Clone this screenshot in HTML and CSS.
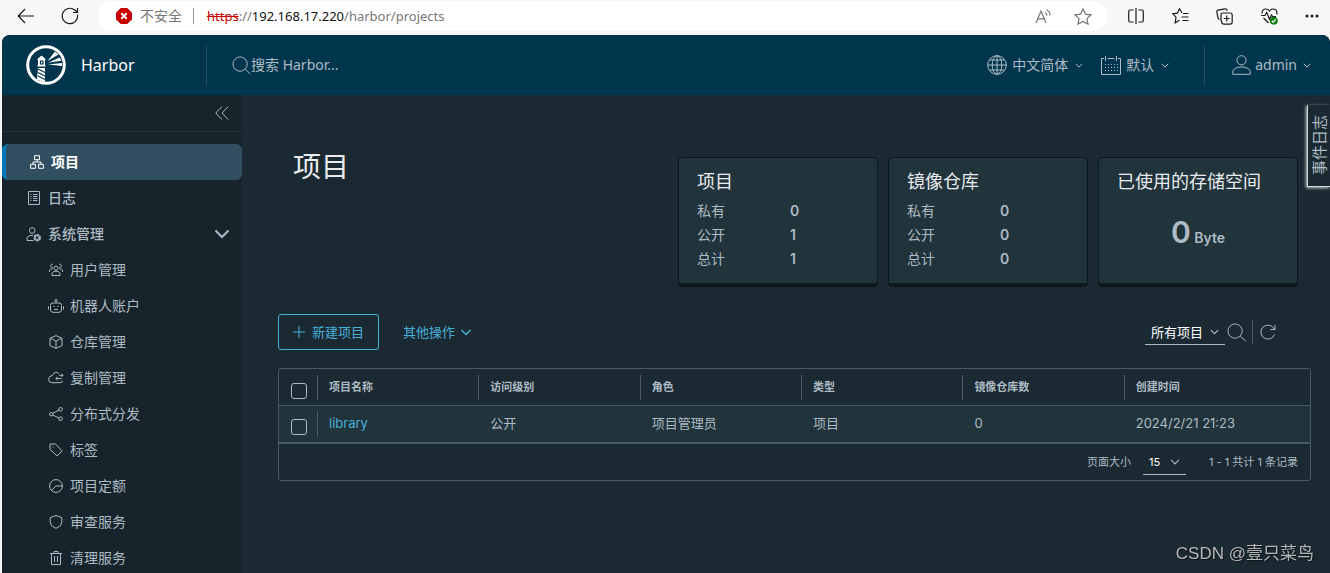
FILE: index.html
```html
<!DOCTYPE html>
<html lang="zh-CN">
<head>
<meta charset="utf-8">
<title>Harbor</title>
<link rel="stylesheet" href="styles.css">
</head>
<body>
<svg class="defs" aria-hidden="true">
  <symbol id="chevron" viewBox="0 0 16 10"><path d="M1.500 1.500 8 8l6.500-6.500"/></symbol>
  <symbol id="search" viewBox="0 0 20 20"><circle cx="8.500" cy="8.500" r="7.500"/><path d="m14 14 5.500 5"/></symbol>
</svg>

<div class="browser">
  <div class="browser-nav">
    <button class="tool" aria-label="后退"><svg width="18" height="16" viewBox="0 0 18 16"><path d="M17 8H1.500M8 1 1.200 8 8 15"/></svg></button>
    <button class="tool" aria-label="刷新"><svg width="18" height="18" viewBox="0 0 18 18"><path d="M16.500 7.500A7.700 7.700 0 1 1 13.800 3l2.200 2M16.500 1v4.500H12"/></svg></button>
  </div>
  <div class="address">
    <svg class="warn" width="16" height="16" viewBox="0 0 16 16"><path class="warn-bg" d="M4.700 0h6.600L16 4.700v6.600L11.300 16H4.700L0 11.300V4.700z"/><path class="warn-x" d="m5.300 5.300 5.400 5.400m0-5.400-5.400 5.400"/></svg>
    <span class="unsafe">不安全</span>
    <span class="address-sep"></span>
    <span class="url"><s>https</s>://<b>192.168.17.220</b>/harbor/projects</span>
    <button class="tool muted read" aria-label="朗读"><svg width="16" height="15" viewBox="0 0 16 15"><path d="M1 14 6 2l5 12M2.800 9.800h6.400M10 3.500q2 1 2 3M11.500.8q3.500 1.800 3.500 5.700"/></svg></button>
    <button class="tool muted" aria-label="收藏"><svg width="18" height="17" viewBox="0 0 18 17"><path d="m9 1 2.400 5.100 5.600.7-4.100 3.800 1.100 5.500L9 13.400l-5 2.700 1.100-5.500L1 6.800l5.600-.7z"/></svg></button>
  </div>
  <div class="browser-tools">
    <button class="tool" aria-label="分屏"><svg width="16" height="16" viewBox="0 0 16 16"><path d="M8 0v16M5.500 2H2Q.7 2 .7 3.500v9Q.7 14 2 14h3.500M10.500 2H14q1.300 0 1.300 1.500v9q0 1.500-1.300 1.500h-3.500"/></svg></button>
    <button class="tool" aria-label="收藏夹"><svg width="17" height="16" viewBox="0 0 17 16"><path d="M10 5 7.500.8 5.300 5.200.8 5.800 4 9.200l-.8 5.600 4.300-2.500M11 5.500h5.500M9.500 9h7M10.500 12.500h6"/></svg></button>
    <button class="tool" aria-label="集锦"><svg width="17" height="17" viewBox="0 0 17 17"><path d="M3.500 11.500Q2.300 11 2 10L.8 4Q.5 2.500 2 2.100L9 .8q1.500-.3 2 1.200l.3.900M5.700 13.500Q5 13 5 12V6.500Q5 5 6.500 5H14q2.200 0 2.200 2v7q0 2.200-2.200 2.200H8Q5.700 16.200 5.700 14zM10.700 7.500v6M7.700 10.500h6"/></svg></button>
    <button class="tool" aria-label="性能"><svg width="17" height="17" viewBox="0 0 17 17"><path d="M1 5.500Q1 1 5 1q2 0 3.500 2Q10 1 12 1q4 0 4 4.500v1M0 7.500h4l1.700-3L8.500 11l2-4 1 1.500H15M2.500 10l5 5"/><circle class="ok-dot" cx="12.700" cy="12.700" r="4"/><path class="ok-check" d="m10.800 13 1.300 1.200 2.500-2.700"/></svg></button>
    <button class="tool" aria-label="更多"><svg width="14" height="4" viewBox="0 0 14 4"><path class="dots" d="M2 2h.01M7 2h.01M12 2h.01"/></svg></button>
  </div>
</div>

<div class="app">
  <header class="header">
    <a class="brand" href="#">
      <svg width="40" height="40" viewBox="0 0 40 40"><circle class="ring" cx="20" cy="20" r="18.300"/><g class="fill"><path d="m15.500 10.500 4 3.500v1h-8v-1zM12 15h7v5h-7zM11.500 20h8v1.500h-8zM12 23h7v14.500l-8-3z"/><path d="m21.500 16 7.500-9.500 3.500 3zM22 17.800l11.500-5.300 2 3.300zM22 19.500l14-1.500v3z"/></g><path class="stripe" d="M14.500 16h2.500v3h-2.500zM12 24l7 3.500M12 27.500l7 3.500M12 31l7 3.500"/></svg>
      <span>Harbor</span>
    </a>
    <label class="search"><svg width="19" height="19"><use href="#search"/></svg><input type="text" placeholder="搜索 Harbor..." aria-label="搜索 Harbor"></label>
    <nav class="header-actions">
      <button class="menu lang"><svg width="20" height="20" viewBox="0 0 20 20"><circle cx="10" cy="10" r="9.300"/><ellipse cx="10" cy="10" rx="4.800" ry="9.300"/><path d="M10 .7v18.600M.7 10h18.600M2.500 5h15M2.500 15h15"/></svg><span>中文简体</span><svg class="caret" width="8" height="5"><use href="#chevron"/></svg></button>
      <button class="menu"><svg width="20" height="19" viewBox="0 0 20 19"><path d="M3 2.500H.5v16h19v-16H17M6.500 2.500h7M4.500 0v5M15.500 0v5"/><path class="dotted" d="M4 8.500h13M4 11.500h13M4 14.500h13"/></svg><span>默认</span><svg class="caret" width="8" height="5"><use href="#chevron"/></svg></button>
      <button class="menu user"><svg width="19" height="20" viewBox="0 0 19 20"><circle cx="9.500" cy="5.300" r="4.600"/><path d="M.8 19.300V16q2.200-4 8.700-4t8.700 4v3.300z"/></svg><span>admin</span><svg class="caret" width="8" height="5"><use href="#chevron"/></svg></button>
    </nav>
  </header>

  <div class="body">
    <aside class="sidebar">
      <div class="collapse"><button aria-label="折叠"><svg width="14" height="14" viewBox="0 0 14 14"><path d="M7 .5.800 7 7 13.500M13.200.5 7 7l6.200 6.500"/></svg></button></div>
      <nav class="side-nav">
        <a class="item active" href="#"><svg width="14" height="14" viewBox="0 0 14 14"><path d="M4.500.7h5v4h-5zM.6 9.300h4.800v4H.6zM8.600 9.300h4.800v4H8.600zM7 4.700V7M3 9.300V7h8v2.300"/></svg>项目</a>
        <a class="item top-level" href="#"><svg width="14" height="14" viewBox="0 0 14 14"><path d="M1.500.5h11v13h-11zM3.500 3.500h1M6 3.500h4.500M3.500 5.500h1M6 5.500h4.500M3.500 7.500h1M6 7.500h4.500M3.500 9.500h1M6 9.500h4.500"/></svg>日志</a>
        <a class="item top-level" href="#"><svg width="15" height="15" viewBox="0 0 15 15"><circle cx="5.700" cy="3.500" r="2.800"/><path d="M7 13.500H.6v-3Q2.300 8 6.500 8.200"/><circle class="gear" cx="10.700" cy="10.700" r="2.500"/></svg>系统管理<svg class="expand" width="16" height="10"><use href="#chevron"/></svg></a>
        <a class="item sub" href="#"><svg width="14" height="14" viewBox="0 0 14 14"><circle cx="7" cy="5.200" r="2"/><path d="M3 12.500v-2.300q1.200-2 4-2t4 2v2.300zM4 1.400a1.600 1.600 0 1 0-.2 2.900M10 1.400a1.600 1.600 0 1 1 .2 2.900M.5 9V7Q1.200 5.700 3.700 5.900M13.500 9V7q-.7-1.300-3.200-1.100"/></svg>用户管理</a>
        <a class="item sub" href="#"><svg width="16" height="14" viewBox="0 0 16 14"><rect x="2.500" y="4" width="11" height="9.300" rx="2.500"/><circle cx="8" cy="1.500" r="1"/><path d="M8 2.500V4M.5 7.500v3M15.500 7.500v3M5.500 7.500h1M9.500 7.500h1M6 10.500h4"/></svg>机器人账户</a>
        <a class="item sub" href="#"><svg width="14" height="14" viewBox="0 0 14 14"><path d="m7 .6 6 2.700v7.400l-6 2.700-6-2.700V3.300zM1 3.300 7 6l6-2.700M7 6v7.400"/></svg>仓库管理</a>
        <a class="item sub" href="#"><svg width="16" height="14" viewBox="0 0 16 14"><path d="M11 2.700Q7-1 4.300 4.500.6 5 .6 8.500q0 3.200 3.400 3.200h8q2.500 0 2.500-2M8 7.500h5.500M9.500 5.800 7.800 7.500l1.700 1.700M11 4.300h4M13.500 2.700 15 4.300l-1.500 1.600"/></svg>复制管理</a>
        <a class="item sub" href="#"><svg width="14" height="14" viewBox="0 0 14 14"><circle cx="2.200" cy="7.200" r="1.700"/><circle cx="11.500" cy="2.300" r="1.800"/><circle cx="11.500" cy="11.700" r="1.800"/><path d="m3.700 6.400 6.200-3.300M3.700 8l6.200 3"/></svg>分布式分发</a>
        <a class="item sub" href="#"><svg width="14" height="14" viewBox="0 0 14 14"><path d="M1 1h5.500l6.500 6.800-4.800 5.200L1 6.500z"/><path d="M3.500 3.800h1"/></svg>标签</a>
        <a class="item sub" href="#"><svg width="14" height="14" viewBox="0 0 14 14"><circle cx="7" cy="7" r="6.400"/><path d="M13.300 7H7L2.500 11.500"/></svg>项目定额</a>
        <a class="item sub" href="#"><svg width="14" height="14" viewBox="0 0 14 14"><path d="m7 .6 5.800 2v4.600q0 4-5.800 6.200-5.800-2.200-5.800-6.200V2.600z"/></svg>审查服务</a>
        <a class="item sub" href="#"><svg width="14" height="14" viewBox="0 0 14 14"><path d="M.8 2.500h12.400M2.500 2.500v11h9v-11M5 2.500v-2h4v2M5.500 5v6M8.500 5v6"/></svg>清理服务</a>
      </nav>
    </aside>

    <main class="main">
      <section class="top">
        <h1>项目</h1>
        <div class="cards">
          <article class="card"><h2>项目</h2><dl><dt>私有</dt><dd>0</dd><dt>公开</dt><dd>1</dd><dt>总计</dt><dd>1</dd></dl></article>
          <article class="card"><h2>镜像仓库</h2><dl><dt>私有</dt><dd>0</dd><dt>公开</dt><dd>0</dd><dt>总计</dt><dd>0</dd></dl></article>
          <article class="card"><h2>已使用的存储空间</h2><p class="storage"><strong>0</strong> Byte</p></article>
        </div>
      </section>

      <div class="toolbar">
        <button class="new"><svg width="12" height="12" viewBox="0 0 12 12"><path d="M6 0v12M0 6h12"/></svg>新建项目</button>
        <button class="other">其他操作<svg width="12" height="7"><use href="#chevron"/></svg></button>
        <div class="filter">
          <div class="select scope"><select aria-label="项目范围"><option>所有项目</option></select><svg width="9" height="6"><use href="#chevron"/></svg></div>
          <button aria-label="搜索"><svg width="19" height="19"><use href="#search"/></svg></button>
          <span class="filter-sep"></span>
          <button aria-label="刷新"><svg width="16" height="16" viewBox="0 0 16 16"><path d="M14.500 10.500A7 7 0 1 1 13.600 4l1.400 1.500M15 .8v4.700h-4.700"/></svg></button>
        </div>
      </div>

      <div class="grid">
        <table>
          <colgroup><col class="col-check"><col class="col"><col class="col"><col class="col"><col class="col"><col class="col"><col></colgroup>
          <thead><tr><th><input type="checkbox" aria-label="全选"></th><th>项目名称</th><th>访问级别</th><th>角色</th><th>类型</th><th>镜像仓库数</th><th>创建时间</th></tr></thead>
          <tbody><tr><td><input type="checkbox" aria-label="选择 library"></td><td><a href="#">library</a></td><td>公开</td><td>项目管理员</td><td>项目</td><td>0</td><td>2024/2/21 21:23</td></tr></tbody>
        </table>
        <footer class="pager">
          <label for="size">页面大小</label>
          <div class="select size"><select id="size"><option>15</option></select><svg width="10" height="6"><use href="#chevron"/></svg></div>
          <span>1 - 1 共计 1 条记录</span>
        </footer>
      </div>
    </main>
    <button class="event-tab"><span>事件日志</span></button>
  </div>
</div>
<div class="watermark">CSDN @壹只菜鸟</div>
</body>
</html>
```
FILE: styles.css
```css
* { box-sizing: border-box; }

body {
  margin: 0;
  height: 100vh;
  display: flex;
  flex-direction: column;
  overflow: hidden;
  background: #f7f7f7;
  color: #adbbc4;
  font: 14px/24px "Noto Sans", "Noto Sans CJK SC", sans-serif;
}

button, input, select { font: inherit; color: inherit; }
button { border: 0; padding: 0; background: none; display: flex; align-items: center; }
a { color: inherit; text-decoration: none; }
svg { fill: none; stroke: currentColor; stroke-width: 1; flex: none; }
h1, h2, p, dl, dd { margin: 0; }
.defs { position: absolute; width: 0; height: 0; }
#chevron { stroke-width: 2; }

/* Browser toolbar */
.browser { height: 35px; padding-bottom: 3px; display: flex; align-items: center; flex: none; color: #1b1b1b; }
.browser-nav { display: flex; gap: 26px; width: 98px; padding-left: 17px; }
.tool svg { stroke-width: 1.2; }
.muted { color: #767676; }
.address {
  flex: 1;
  height: 30px;
  padding: 0 16px 0 18px;
  display: flex;
  align-items: center;
  border-radius: 15px;
  background: #fff;
  color: #767676;
}
.warn { stroke: none; }
.warn-bg { fill: #c80000; }
.warn-x { stroke: #fff; stroke-width: 2; }
.unsafe { margin-left: 8px; }
.address-sep { width: 1px; height: 16px; margin: 0 13px 0 11px; background: #999; }
.url { flex: 1; font-size: 13px; }
.url s { color: #c80000; }
.url b { font-weight: 400; color: #111; }
.read { margin-right: 23px; }
.browser-tools { width: 222px; padding: 0 11px 0 20px; display: flex; align-items: center; justify-content: space-between; }
.ok-dot { fill: #107c10; stroke: none; }
.ok-check { stroke: #fff; }
.dots { stroke-width: 3; stroke-linecap: round; }

/* Application header */
.app {
  flex: 1;
  min-height: 0;
  margin-left: 2px;
  display: flex;
  flex-direction: column;
  overflow: hidden;
  border-radius: 8px 8px 0 0;
  background: #1b2a32;
}
.header { height: 60px; flex: none; display: flex; align-items: center; background: #00364d; }
.brand {
  width: 205px;
  height: 40px;
  padding-left: 24px;
  display: flex;
  align-items: center;
  gap: 15px;
  border-right: 1px solid #274f63;
  color: #fff;
  font-size: 16px;
}
.ring { stroke: #fff; stroke-width: 3; }
.fill { fill: #fff; stroke: none; }
.stripe { stroke: #00364d; stroke-width: 1.2; }
.search { flex: 1; display: flex; align-items: center; padding-left: 25px; }
.search input { flex: 1; min-width: 0; padding: 0; border: 0; outline: 0; background: none; }
.search input::placeholder { color: #adbbc4; opacity: 1; }
.header-actions { display: flex; align-items: center; gap: 18px; padding-right: 19px; }
.menu { height: 40px; gap: 5px; }
.dotted { stroke-dasharray: 1 2; }
.caret { margin-left: 2px; }
.user { gap: 4px; margin-left: 17px; padding-left: 27px; border-left: 1px solid #274f63; }

/* Sidebar */
.body { flex: 1; min-height: 0; display: flex; position: relative; }
.sidebar { width: 240px; flex: none; overflow: hidden; background: #17242b; }
.collapse { height: 37px; padding-right: 13px; display: flex; align-items: center; justify-content: flex-end; border-bottom: 1px solid #22343c; }
.side-nav { padding-top: 12px; }
.item { height: 36px; padding: 0 12px 0 24px; display: flex; align-items: center; gap: 6px; }
.item.active { padding-left: 23px; border-left: 4px solid #0079b8; border-radius: 6px; background: #324f62; color: #fff; font-weight: 700; }
.item.top-level { font-weight: 500; }
.item.sub { padding-left: 46px; }
.item > svg:first-child { width: 16px; }
.gear { stroke-width: 2.500; stroke-dasharray: 2.200 .5; }
.expand { margin-left: auto; }

/* Content */
.main { flex: 1; min-width: 0; padding: 50px 19px 0 36px; display: flex; flex-direction: column; font-family: Inter, "Noto Sans CJK SC", sans-serif; }
.top { padding: 0 13px 0 15px; display: flex; justify-content: space-between; }
h1 { color: #e9ecef; font-size: 28px; line-height: 44px; font-weight: 400; }
.cards { display: flex; gap: 10px; padding-top: 12px; }
.card { width: 200px; height: 130px; padding: 12px 18px 0; border: 1px solid #0f171c; border-bottom-width: 4px; border-radius: 4px; background: #21333b; }
h2 { color: #e9ecef; font-size: 18px; line-height: 24px; font-weight: 400; white-space: nowrap; }
dl { padding-top: 5px; display: grid; grid-template-columns: 93px 1fr; }
dd { font-weight: 600; }
.storage { padding-top: 20px; text-align: center; font-weight: 600; line-height: 36px; }
.storage strong { font-size: 30px; font-weight: 600; }

.toolbar { margin-top: 27px; display: flex; align-items: center; color: #49afd9; font-size: 13px; }
.new { height: 36px; padding: 0 14px; gap: 7px; border: 1px solid #49afd9; border-radius: 3px; }
.other { margin-left: 24px; gap: 5px; }
.filter { margin-left: auto; padding-right: 35px; display: flex; align-items: center; color: #adbbc4; }
.filter-sep { width: 1px; height: 24px; margin: 0 7px 0 6px; background: #495a67; }
.select { display: grid; align-items: center; border-bottom: 1px solid #adbbc4; }
.select select { grid-area: 1 / 1; width: 100%; border: 0; outline: 0; padding: 0 6px; appearance: none; background: none; color: #fff; }
.select svg { grid-area: 1 / 1; justify-self: end; margin-right: 6px; pointer-events: none; }
.scope { width: 80px; margin-right: 2px; }

/* Data grid */
.grid { margin-top: 18px; border: 1px solid #495a67; border-radius: 3px; font-size: 13px; }
table { width: 100%; table-layout: fixed; border-collapse: separate; border-spacing: 0; }
.col-check { width: 39px; }
.col { width: 15.65%; }
th, td { height: 37px; padding: 0 0 0 11px; border-bottom: 1px solid #495a67; text-align: left; font-weight: 400; }
th { font-size: 11px; font-weight: 600; background: linear-gradient(#495a67, #495a67) right center / 1px 25px no-repeat; }
th:last-child { background: none; }
tbody tr { background: #21333b; }
td:first-child { background: linear-gradient(#495a67, #495a67) right center / 1px 26px no-repeat; }
td { height: 38px; padding-bottom: 2px; border-bottom-width: 2px; }
td a { color: #49afd9; }
input[type="checkbox"] { display: block; appearance: none; width: 16px; height: 16px; margin: 8px 0 0 1px; border: 1px solid #adbbc4; border-radius: 3px; }
.pager { height: 36px; padding-right: 12px; display: flex; align-items: center; justify-content: flex-end; font-size: 11px; }
.size { width: 43px; margin: 0 23px 0 12px; }

.event-tab {
  position: absolute;
  top: 10px;
  right: 0;
  width: 23px;
  height: 82px;
  justify-content: center;
  border-left: 1px solid #d5d9dc;
  border-bottom: 1px solid #d5d9dc;
  background: #1b2a32;
  box-shadow: -1px 1px 3px #c8cdd0;
}
.event-tab span { writing-mode: vertical-rl; text-orientation: sideways; transform: rotate(180deg); font-size: 15px; line-height: 20px; }
.watermark { position: fixed; right: 16px; bottom: 7px; color: #b4b9bc; font: 17px/24px "Liberation Sans", "Noto Sans CJK SC", sans-serif; text-shadow: 1px 1px 1px #111; }
```
